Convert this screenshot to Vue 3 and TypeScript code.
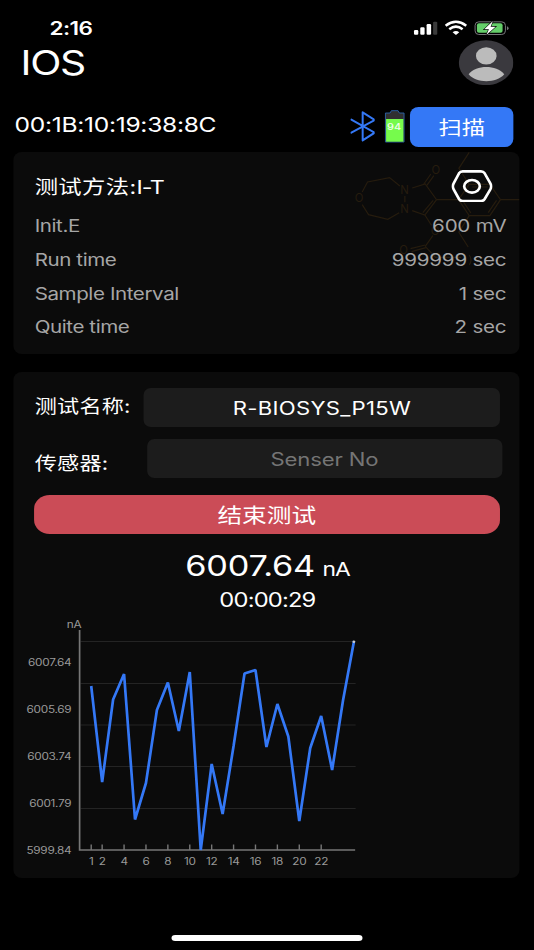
<script setup lang="ts">
interface Param {
  name: string
  value: string
}

const params: Param[] = [
  { name: 'Init.E', value: '600 mV' },
  { name: 'Run time', value: '999999 sec' },
  { name: 'Sample Interval', value: '1 sec' },
  { name: 'Quite time', value: '2 sec' },
]

const yLabels = [
  { text: '6007.64', y: 666 },
  { text: '6005.69', y: 713 },
  { text: '6003.74', y: 760 },
  { text: '6001.79', y: 807 },
  { text: '5999.84', y: 854 },
]
const gridLines = [641.5, 683.5, 725, 766.5, 808.5]
const xTicks = [1, 2, 4, 6, 8, 10, 12, 14, 16, 18, 20, 22]

const levels = [
  686, 782, 699.5, 674, 819.5, 783, 710, 682.5, 731, 672, 850, 764, 814, 746,
  673.5, 670, 747, 704, 736.5, 821, 748, 716, 770, 700, 641,
]
const xAt = (n: number): number => 90.6 + (n - 1) * 10.95
const trace = levels.map((y, i) => `${xAt(i + 1).toFixed(2)},${y}`).join(' ')
</script>

<template>
  <div class="screen">
    <div class="status">
      <span class="clock">2:16</span>
      <svg class="status-icons" viewBox="70 60 288 50" preserveAspectRatio="none">
        <g fill="#fff">
          <rect x="71" y="90" width="13" height="14.500" rx="3.500" />
          <rect x="90" y="82" width="13" height="22.500" rx="3.500" />
          <rect x="109" y="72" width="13.500" height="32.500" rx="3.500" />
          <rect x="128.500" y="65" width="12.500" height="39.500" rx="3.500" fill="#3a3a3a" />
        </g>
        <g fill="none" stroke="#fff" stroke-width="7.500">
          <path d="M166 77 Q197 54 228 77" />
          <path d="M177 88 Q197 72 217 88" />
        </g>
        <path d="M187 97 Q197 89 207 97 L199 103.500 Q197 105 195 103.500 Z" fill="#fff" />
        <rect x="254.500" y="65.500" width="91" height="38" rx="11" fill="none" stroke="#77777a" stroke-width="3" />
        <rect x="260" y="70" width="77" height="28" rx="6" fill="#65ce6a" />
        <path d="M350 79 Q355 80 355 85 Q355 90 350 91 Z" fill="#77777a" />
        <path d="M308 63 L282 88 H296 L288 105 L316 80 H301 Z" fill="#fff" stroke="#000" stroke-width="3.500" paint-order="stroke" />
      </svg>
    </div>

    <header class="header">
      <h1>IOS</h1>
      <svg class="avatar" viewBox="205 118 165 137" preserveAspectRatio="none">
        <ellipse cx="287.500" cy="186.500" rx="82" ry="67.500" fill="#3a393e" />
        <ellipse cx="288" cy="166" rx="31" ry="26" fill="#bbb" />
        <path d="M235 221 C258 192 318 192 342 221 C318 249 258 249 235 221 Z" fill="#bbb" />
      </svg>
    </header>

    <div class="device">
      <span class="mac">00:1B:10:19:38:8C</span>
      <svg class="bluetooth" viewBox="48 66 76 92" preserveAspectRatio="none">
        <path d="M51 92 L121 131 L85 154 V70 L121 93 L51 131" fill="none" stroke="#3478f6" stroke-width="6" stroke-linejoin="round" stroke-linecap="round" />
      </svg>
      <svg class="cell" viewBox="153 60 61 98" preserveAspectRatio="none">
        <path d="M156 69 H170 L174 62 H194 L198 69 H212 V156 H156 Z" fill="#303030" stroke="#2c67b5" stroke-width="2.500" />
        <rect x="158" y="87" width="52" height="68" fill="#76fb4c" />
        <text class="cell-text" transform="translate(182 119.500) scale(1.217 1)">94</text>
      </svg>
      <button class="scan">扫描</button>
    </div>

    <section class="card method">
      <svg class="molecule" viewBox="0 21 558 369" preserveAspectRatio="none">
        <g class="bonds">
          <path d="M83 141 L99 111 L165 98 L196 123" />
          <path d="M83 179 L102 209 L160 223 L194 203" />
          <path d="M211 153 V172" />
          <path d="M233 129 L272 117 L306 164 L271 210 L233 197" />
          <path d="M268 117 L289 87 M277 121 L298 92" />
          <path d="M296 166 L265 203" />
          <path d="M306 164 H372" />
          <path d="M372 164 L404 118 H466 L498 164 L466 212 H404 Z" />
          <path d="M384 166 L409 204 M413 126 H459 M486 166 L461 203" />
          <path d="M498 164 H558" />
          <path d="M404 118 L373 70 L404 22" />
          <path d="M404 212 L373 262 L401 306" />
          <path d="M271 210 L291 241 M295 272 L272 304" />
          <path d="M272 300 L228 311 M274 308 L231 320" />
          <path d="M272 304 L303 337 H380" />
          <path d="M404 330 Q415 345 404 360" />
        </g>
        <g class="atoms">
          <text x="210" y="147">N</text>
          <text x="210" y="204">N</text>
          <text x="74" y="171">O</text>
          <text x="304" y="86">O</text>
          <text x="302" y="270">O</text>
          <text x="207" y="328">O</text>
        </g>
      </svg>
      <div class="method-head">
        <span>测试方法:<span class="code">I-T</span></span>
        <svg class="eye" viewBox="352 73 124 98" preserveAspectRatio="none">
          <path d="M386 77 H441 Q448 77 452 83 L469 113 Q474 122 469 131 L452 160 Q448 166 441 166 H386 Q379 166 375 160 L359 131 Q354 122 359 113 L375 83 Q379 77 386 77 Z" />
          <ellipse cx="414" cy="122" rx="23.500" ry="19" />
        </svg>
      </div>
      <div v-for="p in params" :key="p.name" class="param">
        <span class="param-name">{{ p.name }}</span>
        <span class="param-value">{{ p.value }}</span>
      </div>
    </section>

    <section class="card test">
      <div class="field">
        <label>测试名称:</label>
        <div class="input">R-BIOSYS_P15W</div>
      </div>
      <div class="field sensor">
        <label>传感器:</label>
        <div class="input placeholder">Senser No</div>
      </div>
      <button class="stop">结束测试</button>
      <div class="reading"><span class="value">6007.64</span><span class="unit">nA</span></div>
      <div class="elapsed">00:00:29</div>
      <svg class="chart" viewBox="14 614 506 264" preserveAspectRatio="none">
        <path v-for="y in gridLines" :key="y" :d="`M80 ${y} H355`" stroke="#242424" stroke-width="1" />
        <path d="M79 630 V850 H354.500" fill="none" stroke="#777" stroke-width="1.700" />
        <path v-for="n in xTicks" :key="n" :d="`M${xAt(n)} 844.500 V850`" stroke="#777" stroke-width="1.400" />
        <polyline :points="trace" fill="none" stroke="#3478f6" stroke-width="2.700" stroke-linejoin="bevel" />
        <circle cx="353.200" cy="641.700" r="1.300" fill="#ccc" />
        <g class="labels">
          <text transform="translate(73.500 627.700) scale(1.217 1)" text-anchor="middle">nA</text>
          <text v-for="l in yLabels" :key="l.text" :transform="`translate(70.800 ${l.y}) scale(1.217 1)`" text-anchor="end">{{ l.text }}</text>
          <text v-for="n in xTicks" :key="n" :transform="`translate(${xAt(n)} 865) scale(1.217 1)`" text-anchor="middle">{{ n }}</text>
        </g>
      </svg>
    </section>

    <div class="home-bar"></div>
  </div>
</template>

<style>
html,
body {
  margin: 0;
  background: #000;
  overflow: hidden;
}
</style>

<style scoped>
.screen {
  width: 438.960px;
  height: 950px;
  box-sizing: border-box;
  display: flex;
  flex-direction: column;
  transform: scaleX(1.2165);
  transform-origin: 0 0;
  background: #000;
  color: #fff;
  font-family: Inter, "Noto Sans CJK SC", sans-serif;
}
svg {
  display: block;
  flex: none;
}
button {
  border: 0;
  padding: 0;
  color: #fff;
  font-family: inherit;
}
.status {
  height: 39.500px;
  box-sizing: border-box;
  padding: 17px 19.800px 0 40.700px;
  display: flex;
  justify-content: space-between;
}
.clock {
  font-size: 18.500px;
  line-height: 23px;
  font-weight: 600;
  letter-spacing: -0.500px;
}
.status-icons {
  width: 78.900px;
  height: 16.670px;
  margin-top: 3px;
}
.header {
  height: 45.500px;
  padding: 0 17.200px 0 16.900px;
  display: flex;
  justify-content: space-between;
  align-items: center;
}
h1 {
  margin: 0;
  padding-top: 2px;
  font-size: 33.500px;
  line-height: 45px;
  font-weight: 400;
  letter-spacing: -1.100px;
}
.avatar {
  width: 45.200px;
  height: 45.500px;
}
.device {
  margin-top: 22px;
  height: 39.500px;
  padding: 0 16.800px 0 12px;
  display: flex;
  align-items: center;
}
.mac {
  flex: 1;
  font-size: 20.200px;
  line-height: 30px;
  padding-bottom: 4px;
  letter-spacing: -0.240px;
}
.bluetooth {
  width: 20.800px;
  height: 30.700px;
  margin-right: 8px;
}
.cell {
  width: 16.700px;
  height: 32.700px;
  margin-right: 4.100px;
}
.cell-text {
  font-size: 27px;
  font-weight: 500;
  fill: #f2ffee;
  text-anchor: middle;
}
.scan {
  width: 85px;
  height: 39.500px;
  border-radius: 7px / 8px;
  background: #3478f6;
  font-size: 19.100px;
}
.card {
  position: relative;
  margin: 0 11.500px 0 11.300px;
  box-sizing: border-box;
  border-radius: 7px / 8px;
  background: #0b0b0b;
  overflow: hidden;
}
.method {
  margin-top: 5.500px;
  height: 202px;
  padding: 17px 11.200px 0 17.200px;
}
.molecule {
  position: absolute;
  top: 0;
  right: 0;
  width: 152.900px;
  height: 123px;
}
.bonds {
  fill: none;
  stroke: #261c0e;
  stroke-width: 3.500px;
}
.atoms {
  font-size: 34px;
  fill: #261c0e;
  text-anchor: middle;
}
.method-head {
  position: relative;
  height: 34px;
  padding-right: 11.200px;
  display: flex;
  justify-content: space-between;
  align-items: center;
  font-size: 19.200px;
  letter-spacing: 0.300px;
}
.code {
  letter-spacing: -0.900px;
}
.eye {
  width: 34px;
  height: 32.700px;
}
.eye path,
.eye ellipse {
  fill: none;
  stroke: #fff;
  stroke-width: 8px;
}
.param {
  position: relative;
  height: 33.750px;
  display: flex;
  justify-content: space-between;
  font-size: 16.900px;
  line-height: 46px;
  color: #a6a6a6;
}
.param-name {
  letter-spacing: -0.330px;
}
.param-value {
  letter-spacing: -0.180px;
}
.test {
  margin-top: 17.500px;
  height: 506px;
  padding: 16.500px 0 0 17.200px;
}
.field {
  height: 39px;
  display: flex;
  font-size: 18.200px;
}
.field label {
  width: 90px;
  line-height: 37px;
  letter-spacing: 0.200px;
}
.sensor {
  margin-top: 11.500px;
}
.sensor label {
  width: 92.100px;
  line-height: 48px;
}
.input {
  width: 292.300px;
  height: 39px;
  border-radius: 6px / 7px;
  background: #1c1c1c;
  text-align: center;
  line-height: 41px;
  letter-spacing: 0.250px;
}
.placeholder {
  color: #757575;
  letter-spacing: -0.120px;
}
.stop {
  display: block;
  width: 382.700px;
  height: 39.500px;
  margin: 17px 0 0 -0.500px;
  border-radius: 13px / 14px;
  background: #cb4c57;
  font-size: 20.300px;
}
.reading {
  width: 382.700px;
  height: 44px;
  margin-top: 9.500px;
  line-height: 44px;
  text-align: center;
}
.value {
  font-size: 28.200px;
  letter-spacing: -0.200px;
}
.unit {
  margin-left: 6.200px;
  font-size: 18.800px;
  letter-spacing: -0.900px;
}
.elapsed {
  width: 382.700px;
  height: 25px;
  line-height: 25px;
  text-align: center;
  font-size: 19.500px;
  letter-spacing: -0.680px;
}
.chart {
  width: 416px;
  height: 264px;
  margin: 1px 0 0 -16.900px;
}
.labels {
  font-size: 9.700px;
  letter-spacing: -0.220px;
  fill: #999;
}
.home-bar {
  width: 156.500px;
  height: 6px;
  margin: 57px auto 0;
  border-radius: 3px;
  background: #fff;
}
</style>
